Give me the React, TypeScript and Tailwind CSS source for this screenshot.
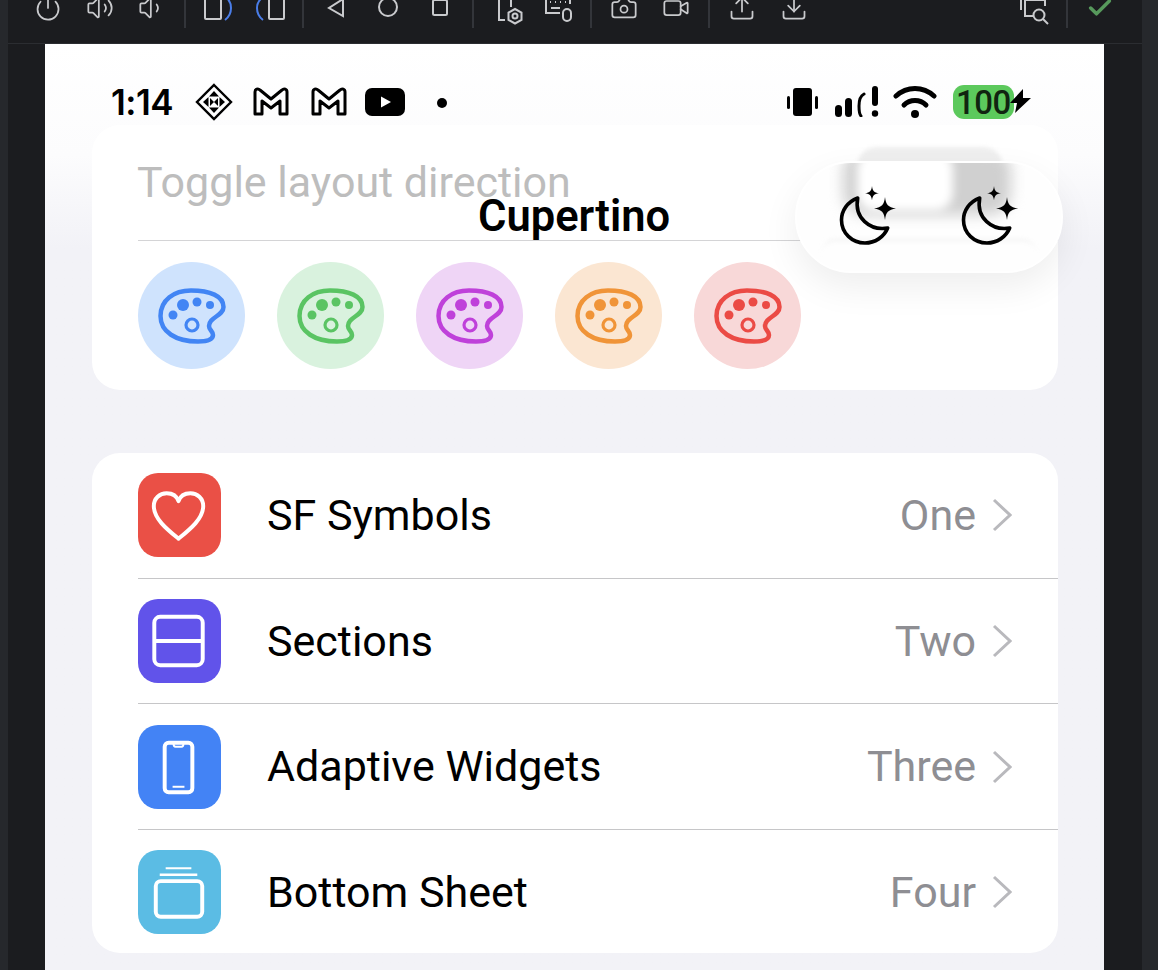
import type { ReactNode } from 'react'
import { Camera, Check, Download, Power, Upload, Video, Volume1, Volume2 } from 'lucide-react'

const PALETTES = [
  { bg: 'bg-[#cfe3fd]', fg: 'text-[#4285f4]' },
  { bg: 'bg-[#d9f2de]', fg: 'text-[#5ac463]' },
  { bg: 'bg-[#efd5f6]', fg: 'text-[#bf41da]' },
  { bg: 'bg-[#fbe6d2]', fg: 'text-[#f09438]' },
  { bg: 'bg-[#f8d8d8]', fg: 'text-[#eb4b45]' },
]

const ROWS = [
  { label: 'SF Symbols', value: 'One', bg: 'bg-[#ea5046]', h: 'h-[126px] border-b', pad: 'pb-px', icon: <HeartGlyph /> },
  { label: 'Sections', value: 'Two', bg: 'bg-[#6153ea]', h: 'h-[125px] border-b', pad: '', icon: <SectionsGlyph /> },
  { label: 'Adaptive Widgets', value: 'Three', bg: 'bg-[#4383f5]', h: 'h-[126px] border-b', pad: '', icon: <PhoneGlyph /> },
  { label: 'Bottom Sheet', value: 'Four', bg: 'bg-[#5bbce4]', h: 'h-[123px]', pad: 'pt-px', icon: <StackGlyph /> },
]

function Tool({ children }: { children: ReactNode }) {
  return <svg width="28" height="28" viewBox="0 0 28 28" fill="none" stroke="#c9cacd" strokeWidth="2" className="shrink-0 overflow-visible">{children}</svg>
}

function Sep() {
  return <div className="w-0.5 h-[34px] bg-[#33353a] shrink-0" />
}

function Toolbar() {
  const lucide = 'w-7 h-7 shrink-0 text-[#c9cacd]'
  return (
    <div className="h-[44px] border-b border-[#2b2d31] overflow-hidden">
      <div className="flex items-start gap-[18px] pl-[26px] pr-[28px] -mt-[6px]">
        <div className="flex gap-6">
          <Power className={lucide} strokeWidth={1.500} />
          <Volume2 className={lucide} strokeWidth={1.500} />
          <Volume1 className={lucide} strokeWidth={1.500} />
        </div>
        <Sep />
        <div className="flex gap-6">
          <Tool>
            <rect x="1" y="0" width="16" height="25" rx="1" />
            <path d="M18 1C25 4 27 9 27 14 27 19 25 23 21 26" stroke="#4a7de8" />
          </Tool>
          <Tool>
            <rect x="13" y="0" width="15" height="25" rx="1" />
            <path d="M11 1C4 4 1 9 1 14 1 19 3 23 7 26" stroke="#4a7de8" />
          </Tool>
        </div>
        <Sep />
        <div className="flex gap-6">
          <Tool><path d="M21 5 7 14l14 8z" /></Tool>
          <Tool><circle cx="14" cy="13" r="9" /></Tool>
          <Tool><rect x="7" y="6" width="14" height="15" rx="1.500" /></Tool>
        </div>
        <Sep />
        <div className="flex gap-5 ml-1">
          <Tool>
            <path d="M9 26H3V2h12v11" />
            <circle cx="19" cy="22" r="2.500" />
            <path d="m19 15 6.500 3.500v7.500L19 29.500 12.500 26v-7.500z" />
          </Tool>
          <Tool>
            <path d="M16 19H2V2h24v8" />
            <path d="M6 8h1M11 8h1M16 8h1M21 8h1M7 14h9" />
            <rect x="19" y="15" width="8" height="12" rx="4" />
          </Tool>
        </div>
        <Sep />
        <div className="flex gap-6">
          <Camera className={lucide} strokeWidth={1.500} />
          <Video className={lucide} strokeWidth={1.500} />
        </div>
        <Sep />
        <div className="flex gap-6">
          <Upload className={lucide} strokeWidth={1.500} />
          <Download className={lucide} strokeWidth={1.500} />
        </div>
        <div className="flex-1" />
        <Tool>
          <path d="M1 2v14M5 4v18h9" />
          <path d="M5 6h20v6" />
          <circle cx="19" cy="21" r="5.500" />
          <path d="m23 25 5 5" />
        </Tool>
        <Sep />
        <Check className="w-7 h-7 shrink-0 text-[#57995c]" strokeWidth={3} />
      </div>
    </div>
  )
}

function Mail() {
  return (
    <svg width="36" height="30" viewBox="0 0 36 30" fill="none" stroke="#000" strokeWidth="3" strokeLinejoin="round">
      <path d="M2 5c0-3 3-4 5-2l11 9 11-9c2-2 5-1 5 2v22h-7V14l-9 7-9-7v13H2z" />
    </svg>
  )
}

function StatusBar() {
  return (
    <div className="h-[81px] pl-[66px] pr-[73px] pt-[43px] flex items-start">
      <span className="font-['Inter',sans-serif] font-semibold text-[35px] leading-[34px] tracking-[-0.5px] text-black w-[85px] -mt-[2px]">1:14</span>
      <svg width="38" height="38" viewBox="0 0 38 38" className="-mt-[4px] -ml-[1px] shrink-0" fill="none" stroke="#000" strokeWidth="2.400">
        <path d="M19 2 36 19 19 36 2 19z" />
        <path d="M19 8l5 5.500H14zM19 30l-5-5.500h10zM8 19l5.500-5v10zM30 19l-5.500 5V14zM15 15l4 4-4 4zM23 15v8l-4-4z" fill="#000" stroke="none" />
      </svg>
      <div className="ml-[20px] shrink-0"><Mail /></div>
      <div className="ml-[22px] shrink-0"><Mail /></div>
      <svg width="40" height="28" viewBox="0 0 40 28" className="ml-[18px] mt-[1px] shrink-0">
        <rect width="40" height="28" rx="7" fill="#000" />
        <path d="M16 8.500l10 5.500-10 5.500z" fill="#fff" />
      </svg>
      <div className="w-2.5 h-2.5 rounded-full bg-black ml-[32px] mt-[11px] shrink-0" />
      <div className="flex-1" />
      <svg width="31" height="28" viewBox="0 0 31 28" className="mt-[1px] shrink-0">
        <rect x="6" y="0" width="19" height="28" rx="3" fill="#000" />
        <rect x="0" y="8" width="3" height="13" rx="1.500" fill="#000" />
        <rect x="28" y="8" width="3" height="13" rx="1.500" fill="#000" />
      </svg>
      <svg width="44" height="31" viewBox="0 0 44 31" className="ml-[17px] -mt-[1px] shrink-0">
        <rect x="0" y="19" width="7" height="12" rx="3.500" fill="#000" />
        <rect x="10" y="12" width="7" height="19" rx="3.500" fill="#000" />
        <path d="M29 8c-4 2-5 7-5 12 0 5 0 8 2 10" fill="none" stroke="#000" strokeWidth="3" strokeLinecap="round" />
        <rect x="37" y="0" width="6" height="20" rx="3" fill="#000" />
        <circle cx="40" cy="27.500" r="3.200" fill="#000" />
      </svg>
      <svg width="44" height="32" viewBox="0 0 44 32" className="ml-[14px] -mt-[1px] shrink-0" fill="none" stroke="#000" strokeLinecap="round">
        <path d="M3 10c11-10 27-10 38 0" strokeWidth="5" />
        <path d="M11 19c6-6 16-6 22 0" strokeWidth="5" />
        <circle cx="22" cy="28" r="4" fill="#000" stroke="none" />
      </svg>
      <div className="ml-[16px] w-[61px] h-[34px] -mt-[2px] rounded-[11px] bg-[#5cc95c] shrink-0 flex items-center justify-center font-['Roboto',sans-serif] font-medium text-[33px] leading-none text-[#102410] tracking-[-0.5px]">100</div>
      <svg width="21" height="24" viewBox="0 0 21 24" className="-ml-[4px] mt-[2px] shrink-0">
        <path d="M13 0 0 14h7l-2 10L21 9h-8z" fill="#000" />
      </svg>
    </div>
  )
}

function PaletteGlyph() {
  return (
    <svg width="68" height="56" viewBox="0 0 68 56" fill="none" stroke="currentColor" strokeWidth="4.500">
      <path d="M33 2.500C52 2.500 65.500 8 65.500 19 65.500 28 51 29 51 38 51 42 55 43 55 47 55 52 48 53.500 40 53.500 18 53.500 2.500 44 2.500 28 2.500 12 16 2.500 33 2.500Z" />
      <g fill="currentColor" stroke="none">
        <circle cx="25" cy="17" r="6" />
        <circle cx="39" cy="14" r="4.500" />
        <circle cx="52" cy="17" r="4" />
        <circle cx="15" cy="27" r="4.500" />
      </g>
      <circle cx="34" cy="37" r="6" strokeWidth="3.200" />
    </svg>
  )
}

function HeartGlyph() {
  return (
    <svg width="84" height="84" viewBox="0 0 84 84" fill="none" stroke="#fff" strokeWidth="4" strokeLinejoin="round">
      <path d="M41 66C30 57 16 46 16 33 16 25 22 20 29 20 34 20 39 22 41 28 43 22 48 20 53 20 60 20 66 25 66 33 66 46 52 57 41 66Z" />
    </svg>
  )
}

function SectionsGlyph() {
  return (
    <svg width="84" height="84" viewBox="0 0 84 84" fill="none" stroke="#fff" strokeWidth="4">
      <rect x="16.500" y="17.500" width="49" height="49" rx="6" />
      <path d="M16.500 42h49" />
    </svg>
  )
}

function PhoneGlyph() {
  return (
    <svg width="84" height="84" viewBox="0 0 84 84" fill="none" stroke="#fff" strokeWidth="4">
      <path d="M31 17.500h20a4 4 0 0 1 4 4v42a4 4 0 0 1-4 4H31a4 4 0 0 1-4-4v-42a4 4 0 0 1 4-4Z" />
      <path d="M36 18.500c0 2 1 3 2 3h6c1 0 2-1 2-3" strokeWidth="2" />
      <path d="M35 62h12" strokeWidth="2" />
    </svg>
  )
}

function StackGlyph() {
  return (
    <svg width="84" height="84" viewBox="0 0 84 84" fill="none" stroke="#fff">
      <rect x="18" y="31" width="47" height="36" rx="5" strokeWidth="4" />
      <path d="M22 24.500h38" strokeWidth="2.500" />
      <path d="M28 18h26" strokeWidth="2" />
    </svg>
  )
}

function MoonStars() {
  return (
    <svg width="60" height="60" viewBox="0 0 60 60" fill="none" className="shrink-0">
      <path d="M18.700 12C8 16 2.500 25 2.500 34 2.500 47 13 57 26 57 36 57 45 51 48.700 42 31 45 15 32 18.700 12Z" stroke="#000" strokeWidth="3.600" strokeLinejoin="round" />
      <path d="M46 11c1 8 3 10 11 11.500-8 1.500-10 3.500-11 11.500-1-8-3-10-11-11.500 8-1.500 10-3.500 11-11.500Z" fill="#000" />
      <path d="M33 0c.6 5 2 6.500 7 7.300-5 .8-6.400 2.300-7 7.300-.6-5-2-6.500-7-7.300 5-.8 6.400-2.300 7-7.300Z" fill="#000" />
    </svg>
  )
}

function GlassToggle() {
  return (
    <>
      {/* grey thumb peeking out above the pill */}
      <div className="absolute left-[812px] top-[103px] w-[146px] h-[40px] rounded-[20px] bg-[#efefef] blur-[2px]" />
      <div className="absolute left-[750px] top-[117px] w-[268px] h-[112px] rounded-[56px] border-2 border-white bg-[#fefefe] overflow-hidden shadow-[0_14px_36px_rgba(0,0,0,0.07)]">
        <div className="absolute left-[46px] -top-[14px] w-[168px] h-[66px] rounded-[22px] bg-[#d0d0d0] blur-[7px]" />
        <div className="absolute left-[60px] -top-[12px] w-[96px] h-[60px] rounded-[18px] bg-white blur-[5px]" />
        <div className="absolute left-[24px] top-[76px] w-[216px] h-[30px] rounded-[15px] border-t-2 border-[#f1f1f1] blur-[2px]" />
        <div className="relative flex justify-between pl-[42px] pr-[40px] pt-[23px]">
          <MoonStars />
          <MoonStars />
        </div>
      </div>
    </>
  )
}

export default function App() {
  return (
    <div className="w-[1158px] h-[970px] overflow-hidden flex bg-[#1b1c1f] font-['Roboto',sans-serif]">
      <div className="w-2 bg-[#26282c] shrink-0" />
      <div className="flex-1 min-w-0">
        <Toolbar />
        <div className="pl-[37px] pr-[38px]">
          <div className="relative h-[926px] bg-gradient-to-b from-white via-[#fcfcfd] via-[12%] to-[#f2f2f7] to-[22%] overflow-hidden">
            <StatusBar />

            {/* Palette card */}
            <div className="ml-[47px] mr-[46px] h-[265px] rounded-[28px] bg-white">
              <div className="ml-[46px] h-[116px] border-b border-[#d4d4d6] flex items-center">
                <span className="text-[43px] text-[#bdbdbd] -ml-px">Toggle layout direction</span>
              </div>
              <div className="pl-[46px] pt-[21px] flex gap-[32px]">
                {PALETTES.map((p, i) => (
                  <div key={i} className={`w-[107px] h-[107px] rounded-full flex items-center justify-center ${p.bg} ${p.fg}`}>
                    <PaletteGlyph />
                  </div>
                ))}
              </div>
            </div>

            {/* Settings list */}
            <div className="mt-[63px] ml-[47px] mr-[46px] rounded-[28px] bg-white overflow-hidden">
              {ROWS.map((row) => (
                <div key={row.label} className={`ml-[46px] flex items-center pr-[46px] border-[#c6c6c8] ${row.h} ${row.pad}`}>
                  <div className={`w-[83px] h-[84px] rounded-[20px] flex items-center justify-center shrink-0 ${row.bg}`}>
                    {row.icon}
                  </div>
                  <span className="text-[43px] text-black flex-1 ml-[46px]">{row.label}</span>
                  <span className="text-[43px] text-[#8e8e93]">{row.value}</span>
                  <svg width="20" height="34" viewBox="0 0 20 34" fill="none" stroke="#b9b9bd" strokeWidth="3" className="ml-[16px] shrink-0">
                    <path d="M2 2l16 15L2 32" />
                  </svg>
                </div>
              ))}
            </div>

            {/* Nav title sits over the card */}
            <div className="absolute left-[433px] top-[149px] text-[43.500px] leading-[48px] font-semibold text-black">Cupertino</div>
            <GlassToggle />
          </div>
        </div>
      </div>
      <div className="w-4 bg-[#26282c] shrink-0" />
    </div>
  )
}
